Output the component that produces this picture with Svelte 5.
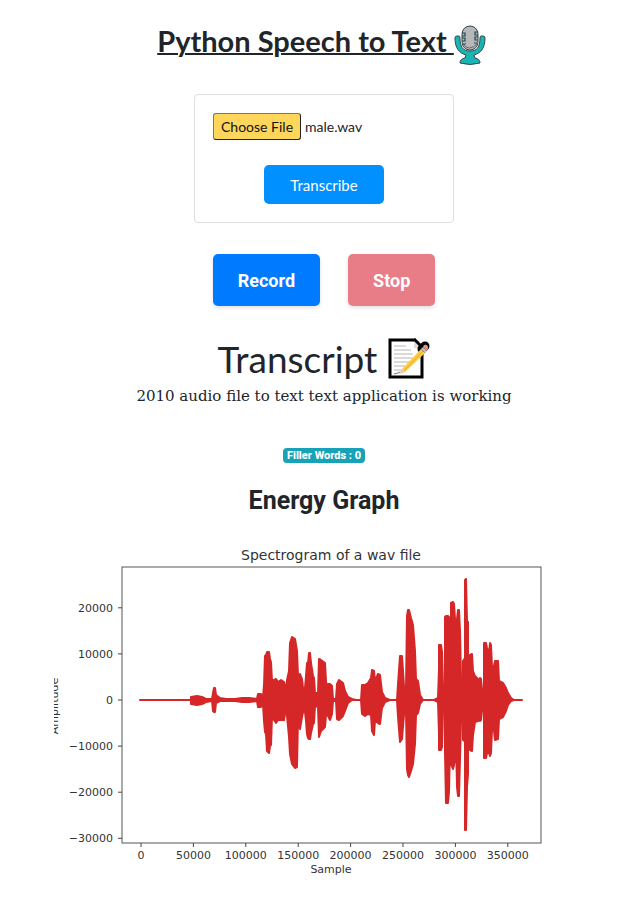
<script>
  import { onMount } from 'svelte';

  let picker;
  let recording = $state(false);

  onMount(() => {
    const transfer = new DataTransfer();
    transfer.items.add(new File([''], 'male.wav', { type: 'audio/wav' }));
    picker.files = transfer.files;
  });

  const xTicks = [0, 50000, 100000, 150000, 200000, 250000, 300000, 350000];
  const yTicks = [20000, 10000, 0, -10000, -20000, -30000];
  const xAt = (v) => 87 + v * 0.001048;
  const yAt = (v) => 160 - v * 0.00461;
  const label = (v) => String(v).replace('-', '−');

  // x, peak above the zero line, peak below it
  const envelope = [
    [86, 1, 1], [137, 1, 1], [137, 4, 5], [143, 5, 6], [148, 4, 5], [152, 2, 3], [158, 2, 2],
    [159, 8, 12], [160, 13, 13], [161, 13, 13], [162, 6, 4], [166, 3, 2], [172, 2, 2], [181, 2, 2],
    [188, 3, 3], [195, 3, 3], [203, 2, 2], [204, 7, 8], [207, 7, 8], [209, 4, 5], [210, 16, 22],
    [211, 45, 33], [212, 46, 35], [213, 49, 52], [215, 49, 54], [216, 42, 47], [217, 39, 46],
    [218, 20, 18], [222, 22, 24], [224, 19, 21], [227, 21, 21], [230, 19, 21], [232, 10, 9],
    [233, 21, 17], [235, 30, 38], [236, 58, 55], [238, 64, 65], [241, 62, 69], [243, 50, 68],
    [244, 25, 20], [246, 27, 30], [248, 22, 18], [249, 13, 13], [251, 13, 13], [252, 25, 22],
    [253, 38, 35], [254, 38, 39], [255, 48, 40], [256, 48, 40], [257, 38, 34], [259, 25, 25],
    [260, 23, 24], [261, 8, 7], [264, 8, 8], [265, 42, 38], [267, 41, 32], [271, 38, 28],
    [272, 20, 16], [273, 11, 13], [274, 17, 17], [276, 17, 21], [278, 15, 15], [279, 2, 2],
    [282, 2, 2], [283, 17, 20], [285, 21, 21], [289, 18, 17], [291, 10, 12], [294, 4, 4],
    [298, 2, 1], [302, 1, 1], [307, 1, 1], [308, 16, 15], [311, 16, 17], [314, 18, 15],
    [317, 23, 16], [318, 31, 32], [320, 30, 36], [321, 20, 22], [324, 27, 24], [326, 26, 25],
    [328, 9, 9], [331, 3, 3], [336, 1, 1], [343, 1, 1], [344, 17, 18], [346, 45, 43],
    [348, 45, 40], [350, 15, 16], [352, 13, 12], [353, 85, 70], [354, 91, 76], [355, 91, 78],
    [357, 83, 72], [359, 76, 65], [361, 50, 45], [362, 22, 16], [364, 20, 14], [366, 6, 5],
    [369, 1, 1], [380, 1, 1], [384, 3, 3], [385, 32, 35], [385, 56, 51], [387, 56, 51],
    [388, 49, 48], [389, 16, 13], [391, 6, 7], [391, 84, 53], [392, 85, 104], [394, 85, 104],
    [395, 84, 93], [396, 46, 46], [397, 57, 55], [397, 98, 65], [399, 99, 70], [400, 97, 66],
    [401, 82, 60], [402, 41, 40], [403, 82, 88], [404, 91, 97], [405, 91, 97], [406, 70, 60],
    [407, 24, 23], [409, 24, 23], [409, 40, 41], [411, 43, 42], [411, 121, 131], [412, 122, 131],
    [413, 80, 88], [414, 79, 75], [414, 15, 24], [416, 15, 24], [416, 46, 51], [418, 47, 52],
    [419, 30, 36], [421, 25, 23], [424, 22, 22], [425, 14, 20], [426, 23, 22], [427, 22, 21],
    [428, 12, 12], [430, 12, 12], [430, 58, 59], [432, 58, 59], [433, 53, 54], [435, 48, 54],
    [436, 58, 57], [437, 56, 54], [438, 34, 31], [440, 35, 32], [441, 40, 41], [444, 40, 40],
    [445, 20, 20], [449, 18, 18], [452, 13, 12], [454, 8, 6], [457, 3, 2], [460, 1, 1], [468, 1, 1]
  ];
  const wave =
    'M' +
    [
      ...envelope.map(([x, up]) => `${x} ${161 - up}`),
      ...envelope.toReversed().map(([x, , down]) => `${x} ${159 + down}`)
    ].join('L') +
    'Z';
</script>

<main>
  <header>
    <h1>Python Speech to Text&nbsp;</h1>
    <svg class="mic" viewBox="0 0 32 40" aria-hidden="true">
      <g stroke="#34484a" stroke-width="1" stroke-linejoin="round">
        <path d="M1 13q0-2 2-2h2q1 0 1 2c0 9 3 13 10 13s10-4 10-13q0-2 1-2h2q2 0 2 2c0 10-4 15-11 17l1 3q5 1 5 5-10 3-20 0 0-4 5-5l1-3C5 28 1 23 1 13z" fill="#19b5b5" />
        <rect x="8" y="1" width="16" height="24" rx="8" fill="#b8b8ba" />
      </g>
      <path d="M8 8h3v3H8m0 2h3v3H8m1 3h3M24 7h-3v3h3m0 2h-3v3h3m-1 3h-3" fill="none" stroke="#174b50" stroke-width="1.2" />
      <path d="M9 19q6 8 14 0" fill="none" stroke="#555" stroke-width=".8" />
    </svg>
  </header>

  <form class="card" onsubmit={(e) => e.preventDefault()}>
    <input bind:this={picker} type="file" aria-label="Audio file" />
    <button class="transcribe" type="submit">Transcribe</button>
  </form>

  <div class="controls">
    <button class="record" type="button" onclick={() => (recording = true)}>Record</button>
    <button class="stop" type="button" disabled={!recording} onclick={() => (recording = false)}>Stop</button>
  </div>

  <section class="transcript">
    <h2>Transcript
      <svg class="note" viewBox="0 0 42 42" aria-hidden="true">
        <path d="M2 2h24l8 8v29H2z" fill="#fff" stroke="#000" stroke-width="3" />
        <path d="M26 2v8h8z" fill="#ddd" />
        <path d="M26 1 34 9" stroke="#000" stroke-width="3" />
        <path d="M34 11 37 8" stroke="#000" stroke-width="9" stroke-linecap="round" />
        <path d="M6 8h12M6 12h17M6 16h19M6 20h19M6 24h17M6 28h11M6 32h8" stroke="#b5b5b5" />
        <path d="m14 31 19-20 4 4-20 19z" fill="#fdcb45" />
        <path d="m16 33 19-20" stroke="#e7a92d" />
        <path d="m14 31 3 3-6 2z" fill="#e9c7a4" />
        <path d="m33 11 2-2 4 4-2 2z" fill="#b9bec5" />
        <path d="m35 9 1-2q4-1 4 3l-1 3z" fill="#ee8f86" />
        <path d="m6 36 4-1 2-1" fill="none" stroke="#777" />
      </svg>
    </h2>
    <p>2010 audio file to text text application is working</p>
  </section>

  <span class="badge">Filler Words : 0</span>

  <h3>Energy Graph</h3>

  <svg class="chart" viewBox="0 0 540 350" role="img" aria-label="Spectrogram of a wav file">
    <text class="title" x="277" y="20">Spectrogram of a wav file</text>
    <path class="wave" d={wave} />
    <rect class="frame" x="68" y="27" width="419" height="276" />
    {#each xTicks as v}
      <path class="tick" d="M{xAt(v)} 303v4" />
      <text x={xAt(v)} y="319">{label(v)}</text>
    {/each}
    {#each yTicks as v}
      <path class="tick" d="M68 {yAt(v)}h-4" />
      <text class="y" x="59" y={yAt(v) + 4}>{label(v)}</text>
    {/each}
    <text x="277" y="333">Sample</text>
    <text transform="translate(4 166) rotate(-90)">Amplitude</text>
  </svg>
</main>

<style>
  :global(body) {
    margin: 0;
    background: #fff;
  }
  main {
    display: flex;
    flex-direction: column;
    align-items: center;
    padding: 20px 0 0 20px;
    color: #212529;
    font-family: Roboto, sans-serif;
  }
  h1, h2, h3, p {
    margin: 0;
  }
  header {
    display: flex;
    align-items: flex-start;
    height: 48px;
    padding-right: 5px;
  }
  h1 {
    font: 700 29px/42px Lato, sans-serif;
    text-decoration: underline;
    text-decoration-thickness: 2px;
  }
  .mic {
    width: 32px;
    height: 40px;
    margin-top: 5px;
  }
  button {
    border: 0;
    border-radius: 5px;
    color: #fff;
  }
  .card {
    display: flex;
    flex-direction: column;
    align-items: center;
    gap: 25px;
    box-sizing: border-box;
    width: 260px;
    margin-top: 26px;
    padding: 18px;
    border: 1px solid #dfdfdf;
    border-radius: 4px;
  }
  input {
    width: 100%;
    font: 14px/21px Lato, sans-serif;
    color: #212529;
  }
  input::file-selector-button {
    margin: 0 4px 0 0;
    padding: 2px 7px;
    border: 1px solid #222;
    border-color: #777 #222 #222 #777;
    border-radius: 3px;
    background: #ffd65c;
    color: #111;
    font: 14px/21px Lato, sans-serif;
  }
  .transcribe {
    width: 120px;
    height: 39px;
    background: #0090ff;
    font: 15px Lato, sans-serif;
  }
  .controls {
    display: flex;
    gap: 28px;
    margin-top: 31px;
  }
  .controls button {
    height: 52px;
    padding: 0 25px;
    background: #007bff;
    box-shadow: 0 2px 4px rgb(0 0 0 / 12%);
    font: 700 18px Roboto, sans-serif;
  }
  .controls .stop {
    background: #dc3545;
  }
  .controls .stop:disabled {
    background: #e87c87;
  }
  .transcript {
    margin-top: 30px;
    text-align: center;
  }
  h2 {
    display: flex;
    align-items: center;
    justify-content: center;
    gap: 11px;
    font: 400 37px/46px Lato, sans-serif;
  }
  .note {
    width: 42px;
    height: 42px;
  }
  p {
    margin-top: 2px;
    font: 15px/24px "DejaVu Serif", serif;
  }
  .badge {
    margin-top: 40px;
    padding: 0 4px;
    border-radius: 4px;
    background: #17a2b8;
    color: #fff;
    font-size: 11px;
    font-weight: 800;
    line-height: 15px;
  }
  h3 {
    margin-top: 20px;
    font-size: 25px;
    font-weight: 700;
    line-height: 36px;
  }
  .chart {
    display: block;
    width: 100%;
    max-width: 540px;
    margin-top: 21px;
    overflow: hidden;
  }
  .chart text {
    fill: #333;
    font: 11px "DejaVu Sans", sans-serif;
    text-anchor: middle;
  }
  .chart .title {
    font-size: 14px;
  }
  .chart .y {
    text-anchor: end;
  }
  .wave {
    fill: #d62728;
    stroke: #d62728;
    stroke-width: 2;
    stroke-linejoin: round;
  }
  .frame {
    fill: none;
    stroke: #555;
  }
  .tick {
    stroke: #444;
  }
</style>
